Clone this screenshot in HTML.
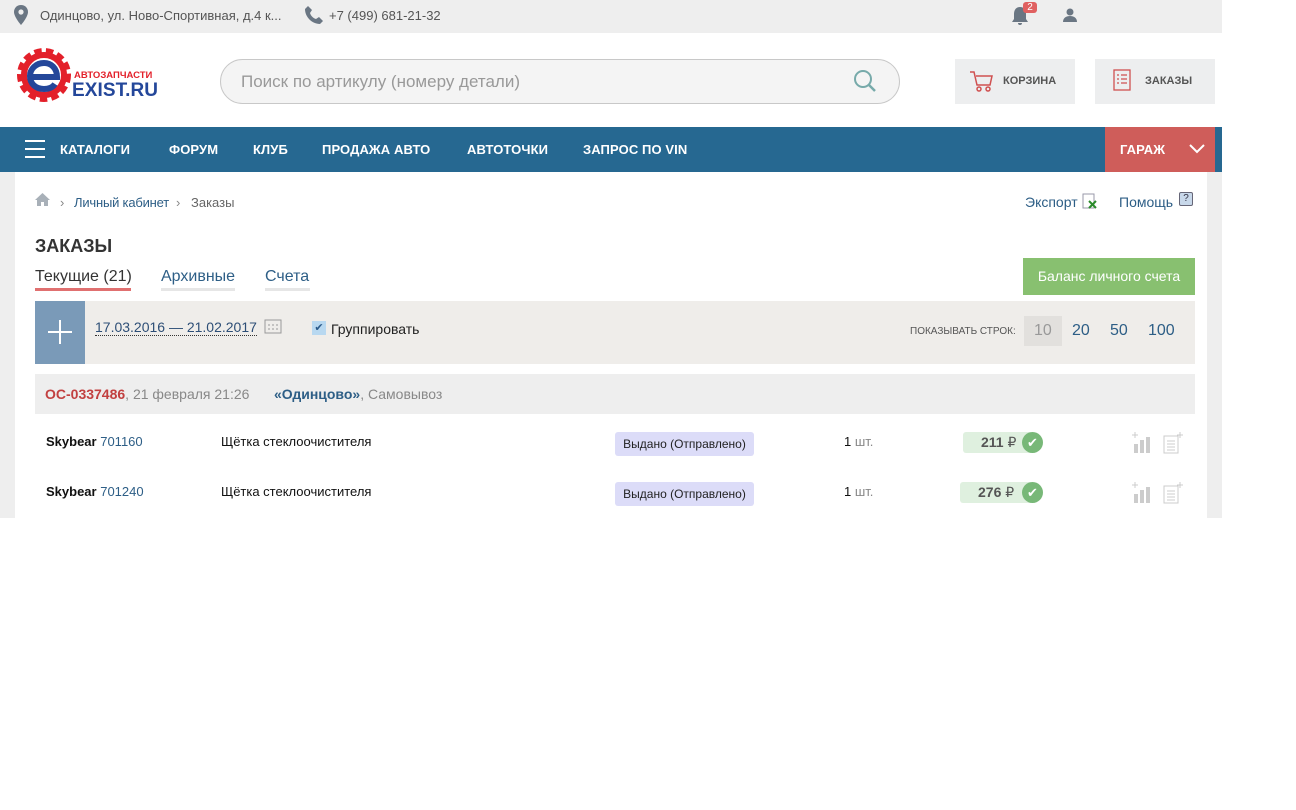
<!DOCTYPE html>
<html><head><meta charset="utf-8"><style>
*{margin:0;padding:0;box-sizing:border-box}
body{width:1296px;height:810px;background:#fff;font-family:"Liberation Sans",sans-serif;position:relative;overflow:hidden}
.a{position:absolute}
.top{left:0;top:0;width:1222px;height:33px;background:#eeeeee;font-size:13px;color:#555}
.nav{left:0;top:127px;width:1222px;height:45px;background:#266891}
.nav span{position:absolute;top:15px;color:#fff;font-weight:bold;font-size:13px;letter-spacing:.1px}
.side{top:172px;width:15px;height:346px;background:#eeeeee}
.btn{background:#edeeef;height:45px;top:59px;font-size:11px;font-weight:bold;color:#555}
.lnk{color:#2d5e86}
</style></head><body>
<div class="a top">
 <svg class="a" style="left:14px;top:5px" width="14" height="20" viewBox="0 0 14 20"><path d="M7 0C3 0 0 3 0 7c0 5 7 13 7 13s7-8 7-13C14 3 11 0 7 0z" fill="#6a7683"/><circle cx="7" cy="7" r="2.6" fill="#eee"/></svg>
 <span class="a" style="left:40px;top:8px">Одинцово, ул. Ново-Спортивная, д.4 к...</span>
 <svg class="a" style="left:304px;top:6px" width="20" height="19" viewBox="0 0 20 19"><path d="M4 0l4 4-2 3c1 3 3 5 6 6l3-2 4 4-3 3C8 18 1 11 1 3z" fill="#6a7683"/></svg>
 <span class="a" style="left:329px;top:8px">+7 (499) 681-21-32</span>
 <svg class="a" style="left:1011px;top:6px" width="18" height="20" viewBox="0 0 18 20"><path d="M9 1c-4 0-6 3-6 7v5l-2 3h16l-2-3V8c0-4-2-7-6-7z M7 17h4a2 2 0 01-4 0z" fill="#6a7683"/></svg>
 <div class="a" style="left:1023px;top:2px;width:14px;height:11px;background:#e06060;border-radius:3px;color:#fff;font-size:10px;text-align:center;line-height:11px">2</div>
 <svg class="a" style="left:1062px;top:7px" width="16" height="16" viewBox="0 0 16 16"><circle cx="8" cy="5" r="3.5" fill="#6a7683"/><path d="M1 15c0-4 3-6 7-6s7 2 7 6z" fill="#6a7683"/></svg>
</div>
<svg class="a" style="left:14px;top:44px" width="150" height="62" viewBox="0 0 150 62">
 <circle cx="30" cy="31" r="23" fill="none" stroke="#e3202a" stroke-width="8" stroke-dasharray="7 4"/>
 <circle cx="30" cy="31" r="20" fill="none" stroke="#e3202a" stroke-width="6"/>
 <path d="M17 33h26c0-9-6-14-13-14-8 0-14 6-14 13 0 8 6 13 14 13 5 0 9-2 11-5" fill="none" stroke="#24479a" stroke-width="6"/>
 <text x="60" y="34" font-family="Liberation Sans" font-weight="bold" font-size="9.5" fill="#e3202a">АВТОЗАПЧАСТИ</text>
 <text x="58" y="52" font-family="Liberation Sans" font-weight="bold" font-size="19" fill="#24479a" textLength="86">EXIST.RU</text>
</svg>
<div class="a" style="left:220px;top:59px;width:680px;height:45px;border:1px solid #c8c8c8;border-radius:23px;background:#f4f4f4"></div>
<span class="a" style="left:241px;top:72px;font-size:17px;color:#999">Поиск по артикулу (номеру детали)</span>
<svg class="a" style="left:853px;top:69px" width="24" height="24" viewBox="0 0 24 24"><circle cx="10" cy="10" r="8" fill="none" stroke="#7aa" stroke-width="2"/><path d="M16 16l6 6" stroke="#7aa" stroke-width="2.5"/></svg>
<div class="a btn" style="left:955px;width:120px"><svg class="a" style="left:14px;top:12px" width="24" height="22" viewBox="0 0 24 22"><path d="M1 1h4l3 13h13l2-9H7" fill="none" stroke="#d05050" stroke-width="1.5"/><circle cx="10" cy="18" r="2" fill="none" stroke="#d05050" stroke-width="1.5"/><circle cx="19" cy="18" r="2" fill="none" stroke="#d05050" stroke-width="1.5"/></svg><span class="a" style="left:48px;top:16px">КОРЗИНА</span></div>
<div class="a btn" style="left:1095px;width:120px"><svg class="a" style="left:18px;top:10px" width="18" height="22" viewBox="0 0 18 22"><rect x="1" y="1" width="16" height="20" fill="none" stroke="#d05050" stroke-width="1.3"/><path d="M4 6h2M8 6h6M4 10h2M8 10h6M4 14h2M8 14h6" stroke="#d05050" stroke-width="1.3"/></svg><span class="a" style="left:50px;top:16px">ЗАКАЗЫ</span></div>
<div class="a nav">
 <svg class="a" style="left:25px;top:13px" width="20" height="18"><path d="M0 1h20M0 9h20M0 17h20" stroke="#fff" stroke-width="2"/></svg>
 <span style="left:60px">КАТАЛОГИ</span><span style="left:169px">ФОРУМ</span><span style="left:253px">КЛУБ</span><span style="left:322px">ПРОДАЖА АВТО</span><span style="left:467px">АВТОТОЧКИ</span><span style="left:583px">ЗАПРОС ПО VIN</span>
 <div class="a" style="left:1105px;top:0;width:110px;height:45px;background:#cf5d5a"></div>
 <span style="left:1120px">ГАРАЖ</span>
 <svg class="a" style="left:1189px;top:17px" width="16" height="10"><path d="M1 1l7 7 7-7" fill="none" stroke="#fff" stroke-width="2"/></svg>
</div>
<div class="a side" style="left:0"></div><div class="a side" style="left:1207px"></div>
<svg class="a" style="left:35px;top:193px" width="15" height="13" viewBox="0 0 15 13"><path d="M7.5 0L0 7h2v6h4V9h3v4h4V7h2z" fill="#a8b0b8"/></svg>
<span class="a" style="left:60px;top:195px;font-size:13px;color:#888">›</span>
<span class="a lnk" style="left:74px;top:195px;font-size:13px;letter-spacing:-.2px">Личный кабинет</span>
<span class="a" style="left:176px;top:195px;font-size:13px;color:#888">›</span>
<span class="a" style="left:191px;top:195px;font-size:13px;color:#666">Заказы</span>
<span class="a lnk" style="left:1025px;top:194px;font-size:14px">Экспорт</span>
<svg class="a" style="left:1082px;top:193px" width="16" height="16"><rect x="1" y="1" width="11" height="14" fill="#fff" stroke="#99a"/><path d="M7 8l7 7M14 8l-7 7" stroke="#2a8a2a" stroke-width="2"/></svg>
<span class="a lnk" style="left:1119px;top:194px;font-size:14px">Помощь</span>
<div class="a" style="left:1179px;top:192px;width:14px;height:14px;border:1px solid #667;border-radius:2px;background:#c8d8ea;font-size:10px;text-align:center;line-height:12px;color:#334">?</div>
<span class="a" style="left:35px;top:236px;font-size:18px;font-weight:bold;color:#333">ЗАКАЗЫ</span>
<span class="a" style="left:35px;top:268px;font-size:16px;color:#333">Текущие (21)</span>
<div class="a" style="left:35px;top:288px;width:96px;height:3px;background:#e07070"></div>
<span class="a lnk" style="left:161px;top:268px;font-size:16px">Архивные</span>
<div class="a" style="left:161px;top:288px;width:74px;height:3px;background:#e6e6e6"></div>
<span class="a lnk" style="left:265px;top:268px;font-size:16px">Счета</span>
<div class="a" style="left:265px;top:288px;width:45px;height:3px;background:#e6e6e6"></div>
<div class="a" style="left:1023px;top:258px;width:172px;height:37px;background:#88c070;color:#fff;font-size:14px;line-height:37px;text-align:center">Баланс личного счета</div>
<div class="a" style="left:35px;top:301px;width:1160px;height:63px;background:#efedea"></div>
<div class="a" style="left:35px;top:301px;width:50px;height:63px;background:#7a9ab8"></div>
<svg class="a" style="left:48px;top:320px" width="24" height="24"><path d="M12 0v24M0 12h24" stroke="#fff" stroke-width="2"/></svg>
<span class="a" style="left:95px;top:319px;font-size:14px;color:#2d4e76;border-bottom:1px dotted #333">17.03.2016 — 21.02.2017</span>
<svg class="a" style="left:264px;top:318px" width="18" height="16"><rect x="1" y="2" width="16" height="13" fill="none" stroke="#999"/><path d="M4 7h2M8 7h2M12 7h2M4 11h2M8 11h2M12 11h2" stroke="#999"/></svg>
<div class="a" style="left:312px;top:321px;width:14px;height:14px;background:#b8d8f0;color:#2a5a8a;font-size:11px;text-align:center;line-height:14px">✔</div>
<span class="a" style="left:331px;top:321px;font-size:14px;color:#222">Группировать</span>
<span class="a" style="left:910px;top:326px;font-size:10px;color:#555">ПОКАЗЫВАТЬ СТРОК:</span>
<div class="a" style="left:1024px;top:316px;width:38px;height:30px;background:#e2e0dd"></div>
<span class="a" style="left:1034px;top:322px;font-size:16px;color:#999">10</span>
<span class="a lnk" style="left:1072px;top:322px;font-size:16px">20</span>
<span class="a lnk" style="left:1110px;top:322px;font-size:16px">50</span>
<span class="a lnk" style="left:1148px;top:322px;font-size:16px">100</span>
<div class="a" style="left:35px;top:374px;width:1160px;height:40px;background:#eeeeee"></div>
<span class="a" style="left:45px;top:386px;font-size:14px;color:#888"><b style="color:#c24040">ОС-0337486</b>, 21 февраля 21:26</span>
<span class="a" style="left:274px;top:386px;font-size:14px;color:#888"><b class="lnk">«Одинцово»</b>, Самовывоз</span>
<span class="a" style="left:46px;top:434px;font-size:13px;color:#111"><b>Skybear</b> <span class="lnk">701160</span></span>
<span class="a" style="left:221px;top:434px;font-size:13px;color:#111">Щётка стеклоочистителя</span>
<div class="a" style="left:615px;top:432px;width:139px;height:24px;background:#dcdcf8;border-radius:3px;font-size:12px;line-height:24px;text-align:center;color:#222">Выдано (Отправлено)</div>
<span class="a" style="left:844px;top:434px;font-size:13px;color:#111">1 <span style="color:#888">шт.</span></span>
<div class="a" style="left:963px;top:432px;width:70px;height:21px;background:#dff0df;border-radius:3px"></div>
<span class="a" style="left:981px;top:434px;font-size:14px;font-weight:bold;color:#555">211 <span style="font-weight:normal">₽</span></span>
<div class="a" style="left:1022px;top:432px;width:21px;height:21px;border-radius:50%;background:#78b878;color:#fff;font-size:13px;text-align:center;line-height:21px">✔</div>
<span class="a" style="left:46px;top:484px;font-size:13px;color:#111"><b>Skybear</b> <span class="lnk">701240</span></span>
<span class="a" style="left:221px;top:484px;font-size:13px;color:#111">Щётка стеклоочистителя</span>
<div class="a" style="left:615px;top:482px;width:139px;height:24px;background:#dcdcf8;border-radius:3px;font-size:12px;line-height:24px;text-align:center;color:#222">Выдано (Отправлено)</div>
<span class="a" style="left:844px;top:484px;font-size:13px;color:#111">1 <span style="color:#888">шт.</span></span>
<div class="a" style="left:960px;top:482px;width:73px;height:21px;background:#dff0df;border-radius:3px"></div>
<span class="a" style="left:978px;top:484px;font-size:14px;font-weight:bold;color:#555">276 <span style="font-weight:normal">₽</span></span>
<div class="a" style="left:1022px;top:482px;width:21px;height:21px;border-radius:50%;background:#78b878;color:#fff;font-size:13px;text-align:center;line-height:21px">✔</div>
<svg class="a" style="left:1132px;top:432px" width="20" height="22"><path d="M3 0v6M0 3h6" stroke="#ccc"/><rect x="2" y="12" width="4" height="9" fill="#ccc"/><rect x="8" y="8" width="4" height="13" fill="#ccc"/><rect x="14" y="5" width="4" height="16" fill="#ccc"/></svg>
<svg class="a" style="left:1163px;top:432px" width="20" height="22"><rect x="1" y="4" width="14" height="17" fill="none" stroke="#ccc"/><path d="M4 9h8M4 12h8M4 15h8M4 18h8M17 0v6M14 3h6" stroke="#ccc"/></svg>
<svg class="a" style="left:1132px;top:482px" width="20" height="22"><path d="M3 0v6M0 3h6" stroke="#ccc"/><rect x="2" y="12" width="4" height="9" fill="#ccc"/><rect x="8" y="8" width="4" height="13" fill="#ccc"/><rect x="14" y="5" width="4" height="16" fill="#ccc"/></svg>
<svg class="a" style="left:1163px;top:482px" width="20" height="22"><rect x="1" y="4" width="14" height="17" fill="none" stroke="#ccc"/><path d="M4 9h8M4 12h8M4 15h8M4 18h8M17 0v6M14 3h6" stroke="#ccc"/></svg>
</body></html>
